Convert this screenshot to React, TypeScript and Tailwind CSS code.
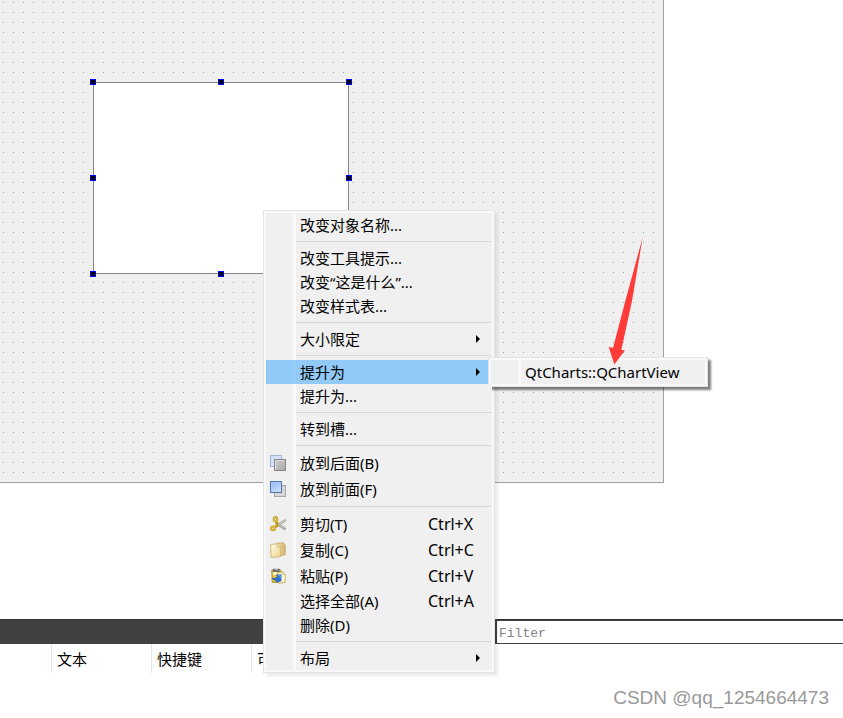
import type { ReactNode } from 'react'

type MenuEntry =
  | { kind: 'separator' }
  | { kind: 'item'; label: string; shortcut?: string; icon?: ReactNode; submenu?: string[]; arrow?: boolean }

function SendBackIcon() {
  return (
    <svg width="16" height="16" viewBox="0 0 16 16" aria-hidden="true">
      <defs>
        <linearGradient id="backBlue" x1="0" y1="0" x2="1" y2="1">
          <stop offset="0" stopColor="#cfe0fa" />
          <stop offset="1" stopColor="#dbe8fd" />
        </linearGradient>
        <linearGradient id="backGray" x1="0" y1="0" x2="1" y2="1">
          <stop offset="0" stopColor="#cfcfcf" />
          <stop offset="1" stopColor="#a9a9a9" />
        </linearGradient>
      </defs>
      <rect x="0.5" y="0.5" width="11" height="11" fill="url(#backBlue)" stroke="#a3b4d3" />
      <rect x="4.5" y="4.5" width="11" height="11" fill="url(#backGray)" stroke="#868686" />
      <path d="M5.5 14.5v-9h9" fill="none" stroke="#dedede" />
    </svg>
  )
}

function BringFrontIcon() {
  return (
    <svg width="16" height="16" viewBox="0 0 16 16" aria-hidden="true">
      <defs>
        <linearGradient id="frontBlue" x1="0" y1="0" x2="0.6" y2="1">
          <stop offset="0" stopColor="#8db8f8" />
          <stop offset="1" stopColor="#c5dcff" />
        </linearGradient>
      </defs>
      <rect x="4.5" y="4.5" width="11" height="11" fill="#d6d6d6" stroke="#a6a6a6" />
      <rect x="0.5" y="0.5" width="11" height="11" fill="url(#frontBlue)" stroke="#5b74a8" />
      <path d="M1.5 10.5v-9h9" fill="none" stroke="#a9cbfc" />
    </svg>
  )
}

function CutIcon() {
  return (
    <svg width="16" height="16" viewBox="0 0 16 16" fill="none" aria-hidden="true">
      <path d="M14.8 4.4 6.5 10" stroke="#9a9a94" strokeWidth="2.4" strokeLinecap="round" />
      <path d="M14.4 4.6 7.5 9.2" stroke="#deded9" strokeWidth="1.1" strokeLinecap="round" />
      <path d="M6.5 7 14.5 12.6" stroke="#93938c" strokeWidth="2.6" strokeLinecap="round" />
      <path d="M8 7.8 14.2 12.2" stroke="#cfcfca" strokeWidth="1.2" strokeLinecap="round" />
      <path d="M7.8 8.4 6 5.2" stroke="#c39d22" strokeWidth="2.6" />
      <path d="M8.5 8.8 4.5 11.3" stroke="#c39d22" strokeWidth="2.8" />
      <ellipse cx="5.5" cy="3.2" rx="1.7" ry="2.1" stroke="#b08f24" strokeWidth="2.2" />
      <ellipse cx="5.5" cy="3.2" rx="1.8" ry="2.2" stroke="#e6c548" strokeWidth="1.2" />
      <ellipse cx="3" cy="12.3" rx="2" ry="1.8" stroke="#b08f24" strokeWidth="2.2" />
      <ellipse cx="3" cy="12.3" rx="2.1" ry="1.9" stroke="#e6c548" strokeWidth="1.2" />
    </svg>
  )
}

function CopyIcon() {
  return (
    <svg width="16" height="16" viewBox="0 0 16 16" aria-hidden="true">
      <defs>
        <linearGradient id="copyFront" x1="0" y1="0" x2="1" y2="1">
          <stop offset="0" stopColor="#fffbe8" />
          <stop offset="1" stopColor="#f0d78c" />
        </linearGradient>
        <linearGradient id="copyBack" x1="0" y1="0" x2="1" y2="0">
          <stop offset="0" stopColor="#f5e3a7" />
          <stop offset="1" stopColor="#cdb069" />
        </linearGradient>
      </defs>
      <path d="M6.5 1.2 13.2.7l2.2 2-.2 10-5.2 1.2z" fill="url(#copyBack)" stroke="#cbb172" strokeWidth="0.9" />
      <path d="M13 1v2.2h2.2" fill="#f8ecc4" stroke="#b99d58" strokeWidth="0.6" />
      <path d="M.6 2.4 7 1.9l3.2 2.9.2 10L1 15.3z" fill="url(#copyFront)" stroke="#cdb36e" strokeWidth="0.9" />
      <path d="m6.9 2.1.2 3 2.9-.2" fill="#fffdf2" stroke="#c3a762" strokeWidth="0.7" />
    </svg>
  )
}

function PasteIcon() {
  return (
    <svg width="16" height="16" viewBox="0 0 16 16" aria-hidden="true">
      <path d="M1.8 2.2 10 1.4l1 1-.6 12-8.2-.2z" fill="#ecc643" stroke="#a08032" strokeWidth="0.9" />
      <path d="M3 4.2h6.6v2.6H3z" fill="#fff8d8" />
      <path d="M3.6 1.2h5.4l.4 2.4H3.2z" fill="#66707c" stroke="#4b535e" strokeWidth="0.6" />
      <path d="M5 .8h2.8v1.4H5z" fill="#b9c1ca" />
      <path d="M7.5 4.5 12.8 4l2.5 2.2-.2 8.2-6.4.8z" fill="#fff5d2" stroke="#c2a660" strokeWidth="0.9" />
      <path d="m12.6 4.2.1 2.3h2.4" fill="#fffdf2" stroke="#b99b51" strokeWidth="0.6" />
      <path d="M2.2 10.2c1.4 1.6 2.4 2 3.9 1.9v2l5-1.2V6.8L6.2 7l1.3 1.8C6 10.2 4.2 10.6 2.2 10.2z" fill="#2673d9" stroke="#1b569f" strokeWidth="0.6" />
      <path d="M7.6 7.7h2.6v2.8" fill="none" stroke="#63aef5" />
    </svg>
  )
}

const entries: MenuEntry[] = [
  { kind: 'item', label: '改变对象名称...' },
  { kind: 'separator' },
  { kind: 'item', label: '改变工具提示...' },
  { kind: 'item', label: '改变“这是什么”...' },
  { kind: 'item', label: '改变样式表...' },
  { kind: 'separator' },
  { kind: 'item', label: '大小限定', arrow: true },
  { kind: 'separator' },
  { kind: 'item', label: '提升为', arrow: true, submenu: ['QtCharts::QChartView'] },
  { kind: 'item', label: '提升为...' },
  { kind: 'separator' },
  { kind: 'item', label: '转到槽...' },
  { kind: 'separator' },
  { kind: 'item', label: '放到后面(B)', icon: <SendBackIcon /> },
  { kind: 'item', label: '放到前面(F)', icon: <BringFrontIcon /> },
  { kind: 'separator' },
  { kind: 'item', label: '剪切(T)', shortcut: 'Ctrl+X', icon: <CutIcon /> },
  { kind: 'item', label: '复制(C)', shortcut: 'Ctrl+C', icon: <CopyIcon /> },
  { kind: 'item', label: '粘贴(P)', shortcut: 'Ctrl+V', icon: <PasteIcon /> },
  { kind: 'item', label: '选择全部(A)', shortcut: 'Ctrl+A' },
  { kind: 'item', label: '删除(D)' },
  { kind: 'separator' },
  { kind: 'item', label: '布局', arrow: true },
]

const handles = [
  'left-0 top-0',
  'left-1/2 top-0',
  'left-full top-0',
  'left-0 top-1/2',
  'left-full top-1/2',
  'left-0 top-full',
  'left-1/2 top-full',
  'left-full top-full',
]

const columns = ['文本', '快捷键', '可选的']

function Submenu({ items }: { items: string[] }) {
  return (
    <ul
      role="menu"
      className="absolute left-full -top-[3px] -ml-1 w-[220px] border border-[#e3e3e3] bg-[#f9f9f9] p-[2px] shadow-[3px_3px_2px_rgba(0,0,0,0.5)]"
    >
      {items.map((label) => (
        <li key={label} role="none">
          <button role="menuitem" className="flex h-6 w-full items-center bg-[#f0f0f0] text-left">
            <span className="h-full w-[27px]" />
            <span className="h-full w-[3px] bg-[#f9f9f9]" />
            <span className="pl-1">{label}</span>
          </button>
        </li>
      ))}
    </ul>
  )
}

function ContextMenu() {
  return (
    <ul
      role="menu"
      className="absolute left-[263px] top-[210px] w-[232px] border border-[#e3e3e3] bg-[#f9f9f9] p-[2px] shadow-[3px_3px_3px_rgba(0,0,0,0.08)]"
    >
      {entries.map((entry, i) => {
        if (entry.kind === 'separator') {
          return (
            <li key={i} role="separator" className="flex h-[9px] items-center bg-[#f0f0f0]">
              <span className="h-full w-[27px]" />
              <span className="h-full w-[3px] bg-[#f9f9f9]" />
              <span className="mr-px h-px flex-1 bg-[#d7d7d7]" />
            </li>
          )
        }

        return (
          <li key={i} role="none" className="relative">
            <button
              role="menuitem"
              className={`flex w-full items-center text-left ${entry.icon ? 'h-[26px]' : 'h-6'} ${
                entry.submenu ? 'bg-[#91c9f7]' : 'bg-[#f0f0f0]'
              }`}
            >
              <span className="w-[27px] pl-1">{entry.icon}</span>
              <span className={`h-full w-[3px] ${entry.submenu ? 'bg-[#98ccf7]' : 'bg-[#f9f9f9]'}`} />
              <span className="flex-1 pl-1">{entry.label}</span>
              {entry.shortcut && <span className="w-16 text-base">{entry.shortcut}</span>}
              {entry.arrow && (
                <svg width="4" height="8" viewBox="0 0 4 8" className="mr-3" aria-hidden="true">
                  <path d="M0 0 4 4 0 8z" fill="#000" />
                </svg>
              )}
            </button>
            {entry.submenu && <Submenu items={entry.submenu} />}
          </li>
        )
      })}
    </ul>
  )
}

export default function App() {
  return (
    <div
      lang="zh-CN"
      className="relative flex min-h-screen flex-col overflow-hidden bg-white font-['Noto_Sans','Noto_Sans_CJK_SC',sans-serif] text-[15px] leading-6 text-black"
    >
      {/* Form being designed */}
      <main className="relative mr-[179px] h-[483px] border-b border-r border-[#a0a0a0] bg-[#f0f0f0]">
        <svg width="100%" height="100%" className="block" aria-hidden="true">
          <defs>
            <pattern id="grid" width="10" height="10" patternUnits="userSpaceOnUse">
              <rect x="3" y="2" width="1" height="1" fill="#a0a0a0" />
            </pattern>
          </defs>
          <rect width="100%" height="100%" fill="url(#grid)" />
        </svg>
        <div className="absolute left-[93px] top-[82px] h-48 w-64 bg-white ring-1 ring-inset ring-[#828790]">
          {handles.map((pos) => (
            <span
              key={pos}
              className={`absolute -ml-[3px] -mt-[3px] size-[6px] border border-[#0000ff] bg-black ${pos}`}
            />
          ))}
        </div>
      </main>

      {/* Action editor */}
      <section className="mt-[136px]">
        <div className="flex h-[25px] border-t border-[#333333] bg-[#404142] pb-px pl-[497px] pt-px">
          <input
            type="text"
            aria-label="Filter"
            placeholder="Filter"
            className="min-w-0 flex-1 bg-white pl-[2px] pt-1 font-['Liberation_Mono',monospace] text-[13px] text-black outline-none placeholder:text-[#808080]"
          />
        </div>
        <table className="border-separate border-spacing-0">
          <thead>
            <tr className="h-[29px]">
              <td className="w-[52px] border-r border-[#e5e5e5] p-0" />
              {columns.map((name) => (
                <th key={name} scope="col" className="w-[100px] border-r border-[#e5e5e5] p-0 pl-[5px] text-left font-normal">
                  {name}
                </th>
              ))}
            </tr>
          </thead>
        </table>
      </section>

      <footer className="mt-auto pb-2 pr-[14px] text-right font-['Liberation_Sans',sans-serif] text-[19px] text-[#999999]">
        CSDN @qq_1254664473
      </footer>

      <ContextMenu />

      {/* Callout arrow */}
      <svg width="40" height="130" viewBox="0 0 40 130" className="pointer-events-none absolute left-[608px] top-[236px]" aria-hidden="true">
        <path d="M34.7 1.3 24 65 13.3 114 17 114.3 6.3 128.5 0.7 110.7 5 112 17.3 65z" fill="#ff3b3a" />
      </svg>
    </div>
  )
}
